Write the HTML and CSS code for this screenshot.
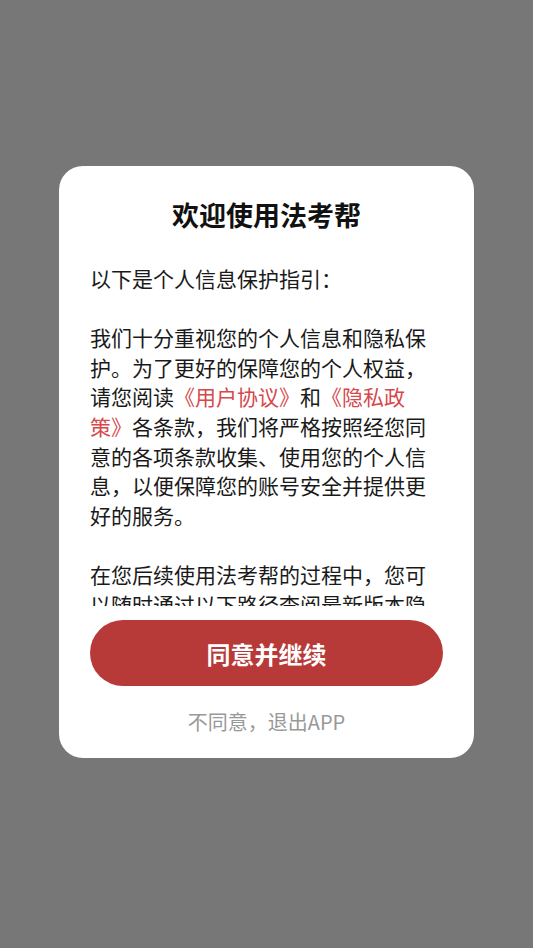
FILE: index.html
```html
<!DOCTYPE html>
<html lang="zh-CN">
<head>
  <meta charset="UTF-8" />
  <title>法考帮 - 个人信息保护指引</title>
  <link rel="stylesheet" href="styles.css">
</head>
<body>

<div class="overlay">
  <div class="dialog">
    <h1 class="dialog-title">欢迎使用法考帮</h1>

    <div class="dialog-content">
      <p>以下是个人信息保护指引：</p>
      <p>我们十分重视您的个人信息和隐私保护。为了更好的保障您的个人权益，请您阅读<span class="link">《用户协议》</span>和<span class="link">《隐私政策》</span>各条款，我们将严格按照经您同意的各项条款收集、使用您的个人信息，以便保障您的账号安全并提供更好的服务。</p>
      <p>在您后续使用法考帮的过程中，您可以随时通过以下路径查阅最新版本隐私政策：我的-设置-关于我们-隐私政策。</p>
    </div>

    <button class="agree-btn">同意并继续</button>
    <button class="reject-btn">不同意，退出APP</button>
  </div>
</div>

</body>
</html>
```

FILE: styles.css
```css
body {
  font-family: "Noto Sans CJK SC", "Noto Sans", sans-serif;
  background: #777777;
  margin: 0;
  padding: 0;
}

.overlay {
  height: 948px;
  padding-top: 166px;
  box-sizing: border-box;
}

.dialog {
  width: 415px;
  margin: 0 auto;
  background: white;
  border-radius: 24px;
  padding: 31px 31px 21px 31px;
  box-sizing: border-box;
  display: flex;
  flex-direction: column;
}

.dialog-title {
  margin: 0 0 31px 0;
  font-size: 27px;
  line-height: 36px;
  font-weight: bold;
  text-align: center;
  color: #111;
}

.dialog-content {
  height: 342px;
  overflow: hidden;
  font-size: 21px;
  line-height: 29.6px;
  color: #1a1a1a;
  text-spacing-trim: space-all;
}

.dialog-content p {
  margin: 0 0 29.6px 0;
}

.link {
  color: #d6484b;
  cursor: pointer;
}

.agree-btn {
  margin-top: 14px;
  height: 66px;
  border: none;
  border-radius: 33px;
  background-color: #b83a38;
  color: white;
  font-family: inherit;
  font-size: 24px;
  font-weight: bold;
  cursor: pointer;
}

.reject-btn {
  margin-top: 21px;
  border: none;
  background: none;
  padding: 0;
  font-family: inherit;
  font-size: 20px;
  line-height: 30px;
  color: #999;
  cursor: pointer;
}
```
